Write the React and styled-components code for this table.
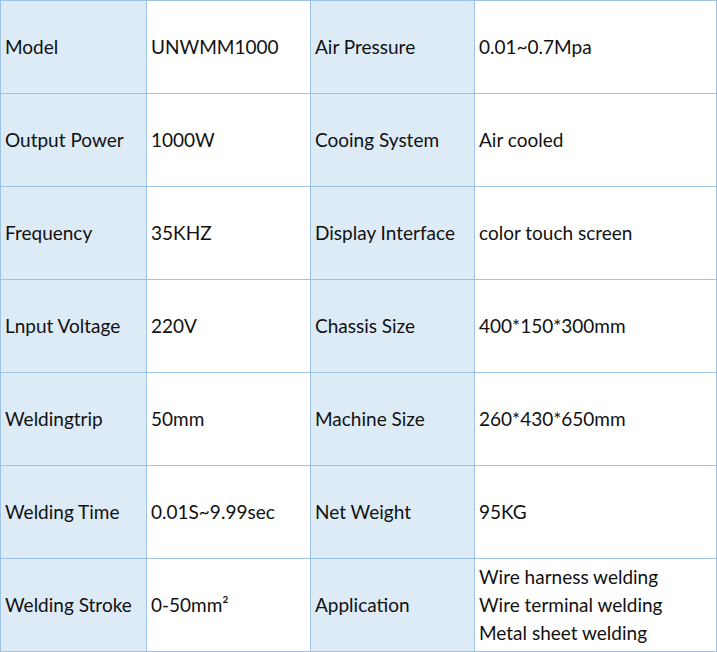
import React from 'react';
import styled, { createGlobalStyle } from 'styled-components';

const GlobalStyle = createGlobalStyle`
  html, body {
    margin: 0;
    padding: 0;
    background: #fff;
  }
`

const SpecGrid = styled.div `
  display: grid;
  grid-template-columns: 146px 164px 164px 242px;
  grid-auto-rows: 93px;
  width: 716px;
  border-top: 1px solid #9dc3e6;
  border-left: 1px solid #9dc3e6;
  font-family: Lato, "Liberation Sans", sans-serif;
  font-size: 19px;
  color: #111;
`
const Cell = styled.div `
  display: flex;
  flex-direction: column;
  justify-content: center;
  padding: 0 4px;
  border-right: 1px solid #9dc3e6;
  border-bottom: 1px solid #9dc3e6;
  background: ${props => props.label ? '#ddebf7' : '#fff'};
  line-height: 28px;
  white-space: nowrap;
`

const specs = [
  ['Model', 'UNWMM1000', 'Air Pressure', '0.01~0.7Mpa'],
  ['Output Power', '1000W', 'Cooing System', 'Air cooled'],
  ['Frequency', '35KHZ', 'Display Interface', 'color touch screen'],
  ['Lnput Voltage', '220V', 'Chassis Size', '400*150*300mm'],
  ['Weldingtrip', '50mm', 'Machine Size', '260*430*650mm'],
  ['Welding Time', '0.01S~9.99sec', 'Net Weight', '95KG'],
  ['Welding Stroke', '0-50mm²', 'Application', ['Wire harness welding', 'Wire terminal welding', 'Metal sheet welding']],
]

const App = () => {
  return (
    <>
      <GlobalStyle />
      <SpecGrid>
        {specs.map((row, i) => row.map((val, j) => (
          <Cell key={`${i}-${j}`} label={j % 2 === 0 ? 1 : 0}>
            {Array.isArray(val) ? val.map(line => <span key={line}>{line}</span>) : val}
          </Cell>
        )))}
      </SpecGrid>
    </>
  )
}

export default App;
